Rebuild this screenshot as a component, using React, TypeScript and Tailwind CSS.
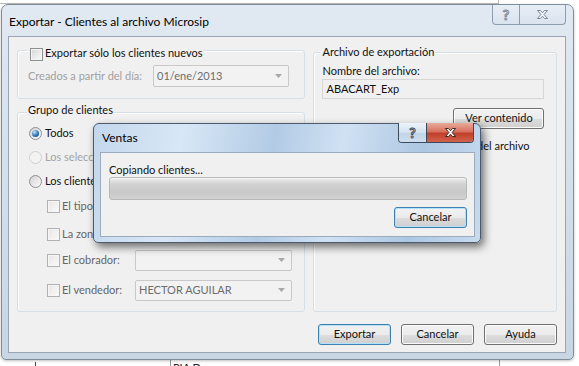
import type { ReactNode } from "react";

const CheckBox = ({ disabled }: { disabled?: boolean }) => (
    <span
        className={`block h-[13px] w-[13px] shrink-0 border ${
            disabled
                ? "border-[#b2b2b2] bg-[linear-gradient(135deg,#e6e6e6,#fafafa)] shadow-[inset_0_0_0_1px_#f6f6f6]"
                : "border-[#8e8f8f] bg-[linear-gradient(135deg,#d6d6d6,#fbfbfb)] shadow-[inset_0_0_0_1px_#f4f4f4]"
        }`}
    />
);

const Radio = ({ checked, disabled }: { checked?: boolean; disabled?: boolean }) => (
    <span
        className={`flex h-[13px] w-[13px] shrink-0 items-center justify-center rounded-full border ${
            disabled
                ? "border-[#cfcfcf] bg-[#f3f3f3]"
                : "border-[#8e8f8f] bg-[linear-gradient(135deg,#d2d2d2,#fbfbfb)]"
        }`}
    >
        {checked && (
            <span className="h-[7px] w-[7px] rounded-full bg-[radial-gradient(circle_at_35%_30%,#bfe6ff,#2f72b6_55%,#123f73)]" />
        )}
    </span>
);

const Arrow = () => (
    <svg width="7" height="4" viewBox="0 0 7 4">
        <path d="M0 0h7L3.5 4z" fill="#a8a8a8" />
    </svg>
);

const Combo = ({ value, className }: { value?: string; className: string }) => (
    <div
        className={`flex items-center justify-between rounded-[2px] border border-[#c9c9c9] bg-[#f2f2f2] pl-[3px] pr-[6px] text-[#6d6d6d] ${className}`}
    >
        <span>{value}</span>
        <Arrow />
    </div>
);

const Btn = ({ children, def, className }: { children: ReactNode; def?: boolean; className: string }) => (
    <div
        className={`flex h-[21px] items-center justify-center rounded-[3px] border bg-[linear-gradient(#f2f2f2_0%,#ebebeb_50%,#dddddd_51%,#cfcfcf_100%)] text-[#111] ${
            def
                ? "border-[#3c7fb1] shadow-[inset_0_0_0_1px_#b2e2f8]"
                : "border-[#707070] shadow-[inset_0_0_0_1px_#fbfbfb]"
        } ${className}`}
    >
        {children}
    </div>
);

const XGlyph = ({ fill, stroke }: { fill: string; stroke: string }) => (
    <svg width="13" height="11" viewBox="0 0 13 11">
        <path
            d="M1.5 1.5h3l2 2.3 2-2.3h3l-3.4 4 3.4 4h-3l-2-2.3-2 2.3h-3l3.4-4z"
            fill={fill}
            stroke={stroke}
            strokeWidth="1"
            strokeLinejoin="round"
        />
    </svg>
);

const Group = ({ legend, legendClass, className, children }: { legend: ReactNode; legendClass: string; className: string; children?: ReactNode }) => (
    <div className={`flex flex-col rounded-[3px] border border-[#d5dfe5] shadow-[inset_1px_1px_0_#fff] ${className}`}>
        <div className={`flex h-[15px] w-fit items-center bg-[#f0f0f0] ${legendClass}`}>{legend}</div>
        {children}
    </div>
);

export default function App() {
    return (
        <div className="relative h-[366px] w-[579px] overflow-hidden bg-white font-['Lato','Liberation_Sans',sans-serif] text-[11px] text-[#111]">
            {/* desktop behind the windows */}
            <div className="flex h-full flex-col">
                <div className="h-[4px] w-[499px] border-b border-r border-[#b9b9b9]" />
                <div className="mt-auto flex h-[6px] items-start">
                    <div className="ml-[35px] mt-[2px] h-[4px] w-px bg-[#444]" />
                    <div className="ml-[134px] h-full w-px bg-[#9a9a9a]" />
                    <span className="ml-[2px] mt-[1px] text-[11px] leading-[13px] text-[#222]">PIA Dnr</span>
                    <div className="ml-auto mr-[79px] h-full w-px bg-[#9a9a9a]" />
                </div>
            </div>

            {/* main window */}
            <div className="absolute left-[1px] top-[4px] flex h-[356px] w-[573px] flex-col rounded-t-[7px] rounded-b-[5px] border border-[#7f8c9a] bg-[linear-gradient(180deg,#e1e9f2,#d5e0eb_45%,#c8d5e3)] px-[6px] pb-[6px] shadow-[0_1px_3px_rgba(0,0,0,0.25)]">
                <div className="relative flex h-[31px] items-center pl-[1px] pt-[3px] text-[12px] text-black">
                    Exportar - Clientes al archivo Microsip
                    <div className="absolute right-[1px] top-0 flex h-[20px] overflow-hidden rounded-b-[4px] border border-t-0 border-[#8d9db0] bg-[linear-gradient(#e8eef5,#d9e3ee)]">
                        <div className="flex w-[27px] items-center justify-center border-r border-[#8d9db0] text-[14px] font-bold text-[#eef2f6] [-webkit-text-stroke:1px_#7a8797]">?</div>
                        <div className="flex w-[45px] items-center justify-center">
                            <XGlyph fill="#f1f4f8" stroke="#7c8a9b" />
                        </div>
                    </div>
                </div>

                <div className="h-[317px] w-[558px] border border-[#97a5b5] bg-[#f0f0f0]">
                    <div className="flex flex-col px-[8px]">
                        <div className="flex gap-[8px]">
                            {/* left column */}
                            <div className="flex w-[289px] flex-col pt-[13px]">
                                <Group
                                    className="h-[49px]"
                                    legendClass="-mt-[4px] ml-[10px] h-[13px] gap-[2px] px-[2px]"
                                    legend={
                                        <>
                                            <CheckBox />
                                            <span className="-mt-[2px]">Exportar sólo los clientes nuevos</span>
                                        </>
                                    }
                                >
                                    <div className="mt-[3px] flex h-[22px] items-center pl-[10px]">
                                        <span className="w-[125px] text-[#a0a0a0]">Creados a partir del día:</span>
                                        <Combo value="01/ene/2013" className="h-[22px] w-[136px]" />
                                    </div>
                                </Group>

                                <Group
                                    className="mt-[13px] h-[200px]"
                                    legendClass="-mt-[10px] ml-[9px] px-[1px]"
                                    legend={<span>Grupo de clientes</span>}
                                >
                                    <div className="mt-[3px] flex h-[24px] items-center gap-[3px] pl-[11px]">
                                        <Radio checked />
                                        <span>Todos</span>
                                    </div>
                                    <div className="flex h-[24px] items-center gap-[3px] pl-[11px] text-[#a3a3a3]">
                                        <Radio disabled />
                                        <span>Los seleccionados</span>
                                    </div>
                                    <div className="flex h-[24px] items-center gap-[3px] pl-[11px]">
                                        <Radio />
                                        <span>Los clientes con:</span>
                                    </div>
                                    <div className="flex h-[26px] items-center gap-[2px] pl-[29px] text-[#666]">
                                        <CheckBox disabled />
                                        <span>El tipo:</span>
                                    </div>
                                    <div className="flex h-[30px] items-center gap-[2px] pl-[29px] text-[#666]">
                                        <CheckBox disabled />
                                        <span>La zona:</span>
                                    </div>
                                    <div className="flex h-[22px] items-center gap-[2px] pl-[29px] text-[#666]">
                                        <CheckBox disabled />
                                        <span className="w-[71px]">El cobrador:</span>
                                        <Combo className="h-[21px] w-[157px]" />
                                    </div>
                                    <div className="mt-[8px] flex h-[22px] items-center gap-[2px] pl-[29px] text-[#666]">
                                        <CheckBox disabled />
                                        <span className="w-[71px]">El vendedor:</span>
                                        <Combo value="HECTOR AGUILAR" className="h-[21px] w-[157px]" />
                                    </div>
                                </Group>
                            </div>

                            {/* right column */}
                            <div className="flex w-[244px] flex-col pt-[15px]">
                                <Group
                                    className="h-[260px]"
                                    legendClass="-mt-[8px] ml-[7px] px-[1px]"
                                    legend={<span>Archivo de exportación</span>}
                                >
                                    <div className="flex w-[222px] flex-col pl-[8px] box-content">
                                        <div className="mt-[4px] flex h-[15px] items-center">Nombre del archivo:</div>
                                        <div className="flex h-[20px] items-center border border-[#d6d6d6] bg-[#f0f0f0] pl-[3px]">ABACART_Exp</div>
                                        <Btn className="mt-[9px] w-[91px] self-end">Ver contenido</Btn>
                                        <div className="mt-[10px] flex h-[15px] items-center justify-end pr-[15px]">
                                            Abrir la carpeta del archivo
                                        </div>
                                    </div>
                                </Group>
                            </div>
                        </div>

                        <div className="mt-[12px] flex justify-end gap-[10px]">
                            <Btn def className="w-[73px]">Exportar</Btn>
                            <Btn className="w-[73px]">Cancelar</Btn>
                            <Btn className="w-[73px]">Ayuda</Btn>
                        </div>
                    </div>
                </div>
            </div>

            {/* modal progress window */}
            <div className="absolute left-[93px] top-[123px] flex h-[120px] w-[388px] flex-col rounded-t-[6px] rounded-b-[5px] border border-[#4b5b6d] bg-[linear-gradient(100deg,#c3d7ec_0%,#d8e7f6_22%,#b2cbe5_45%,#d0e1f3_62%,#adc7e3_82%,#c8dbee_100%)] pb-[5px] pl-[6px] pr-[5px] shadow-[3px_4px_9px_rgba(0,0,0,0.55)]">
                <div className="relative flex h-[28px] items-center pl-[2px] text-[12px] text-black">
                    Ventas
                    <div className="absolute -top-px right-px flex h-[20px] overflow-hidden rounded-b-[4px] border border-t-0 border-[#3b4a5b]">
                        <div className="flex w-[28px] items-center justify-center border-r border-[#3b4a5b] bg-[linear-gradient(#eef3f9,#d4e1ef_50%,#c1d3e8_51%,#cfdff0)] text-[14px] font-bold text-[#f5f8fb] [-webkit-text-stroke:1px_#3e4b5a]">?</div>
                        <div className="flex w-[46px] items-center justify-center bg-[linear-gradient(#e9a99a,#d7725f_45%,#c0402b_55%,#d2624d)]">
                            <XGlyph fill="#ffffff" stroke="#3a2622" />
                        </div>
                    </div>
                </div>
                <div className="flex h-[85px] w-[375px] flex-col border border-[#9babbc] bg-[#f0f0f0] pl-[8px] pr-[7px]">
                    <div className="mt-[10px] flex h-[14px] items-center">Copiando clientes...</div>
                    <div className="h-[23px] rounded-[3px] border border-[#b9b9b9] bg-[linear-gradient(#ececec,#d2d2d2_30%,#c8c8c8_70%,#d3d3d3)] shadow-[inset_0_1px_0_#f4f4f4]" />
                    <Btn def className="mt-[7px] w-[73px] self-end">Cancelar</Btn>
                </div>
            </div>
        </div>
    );
}
